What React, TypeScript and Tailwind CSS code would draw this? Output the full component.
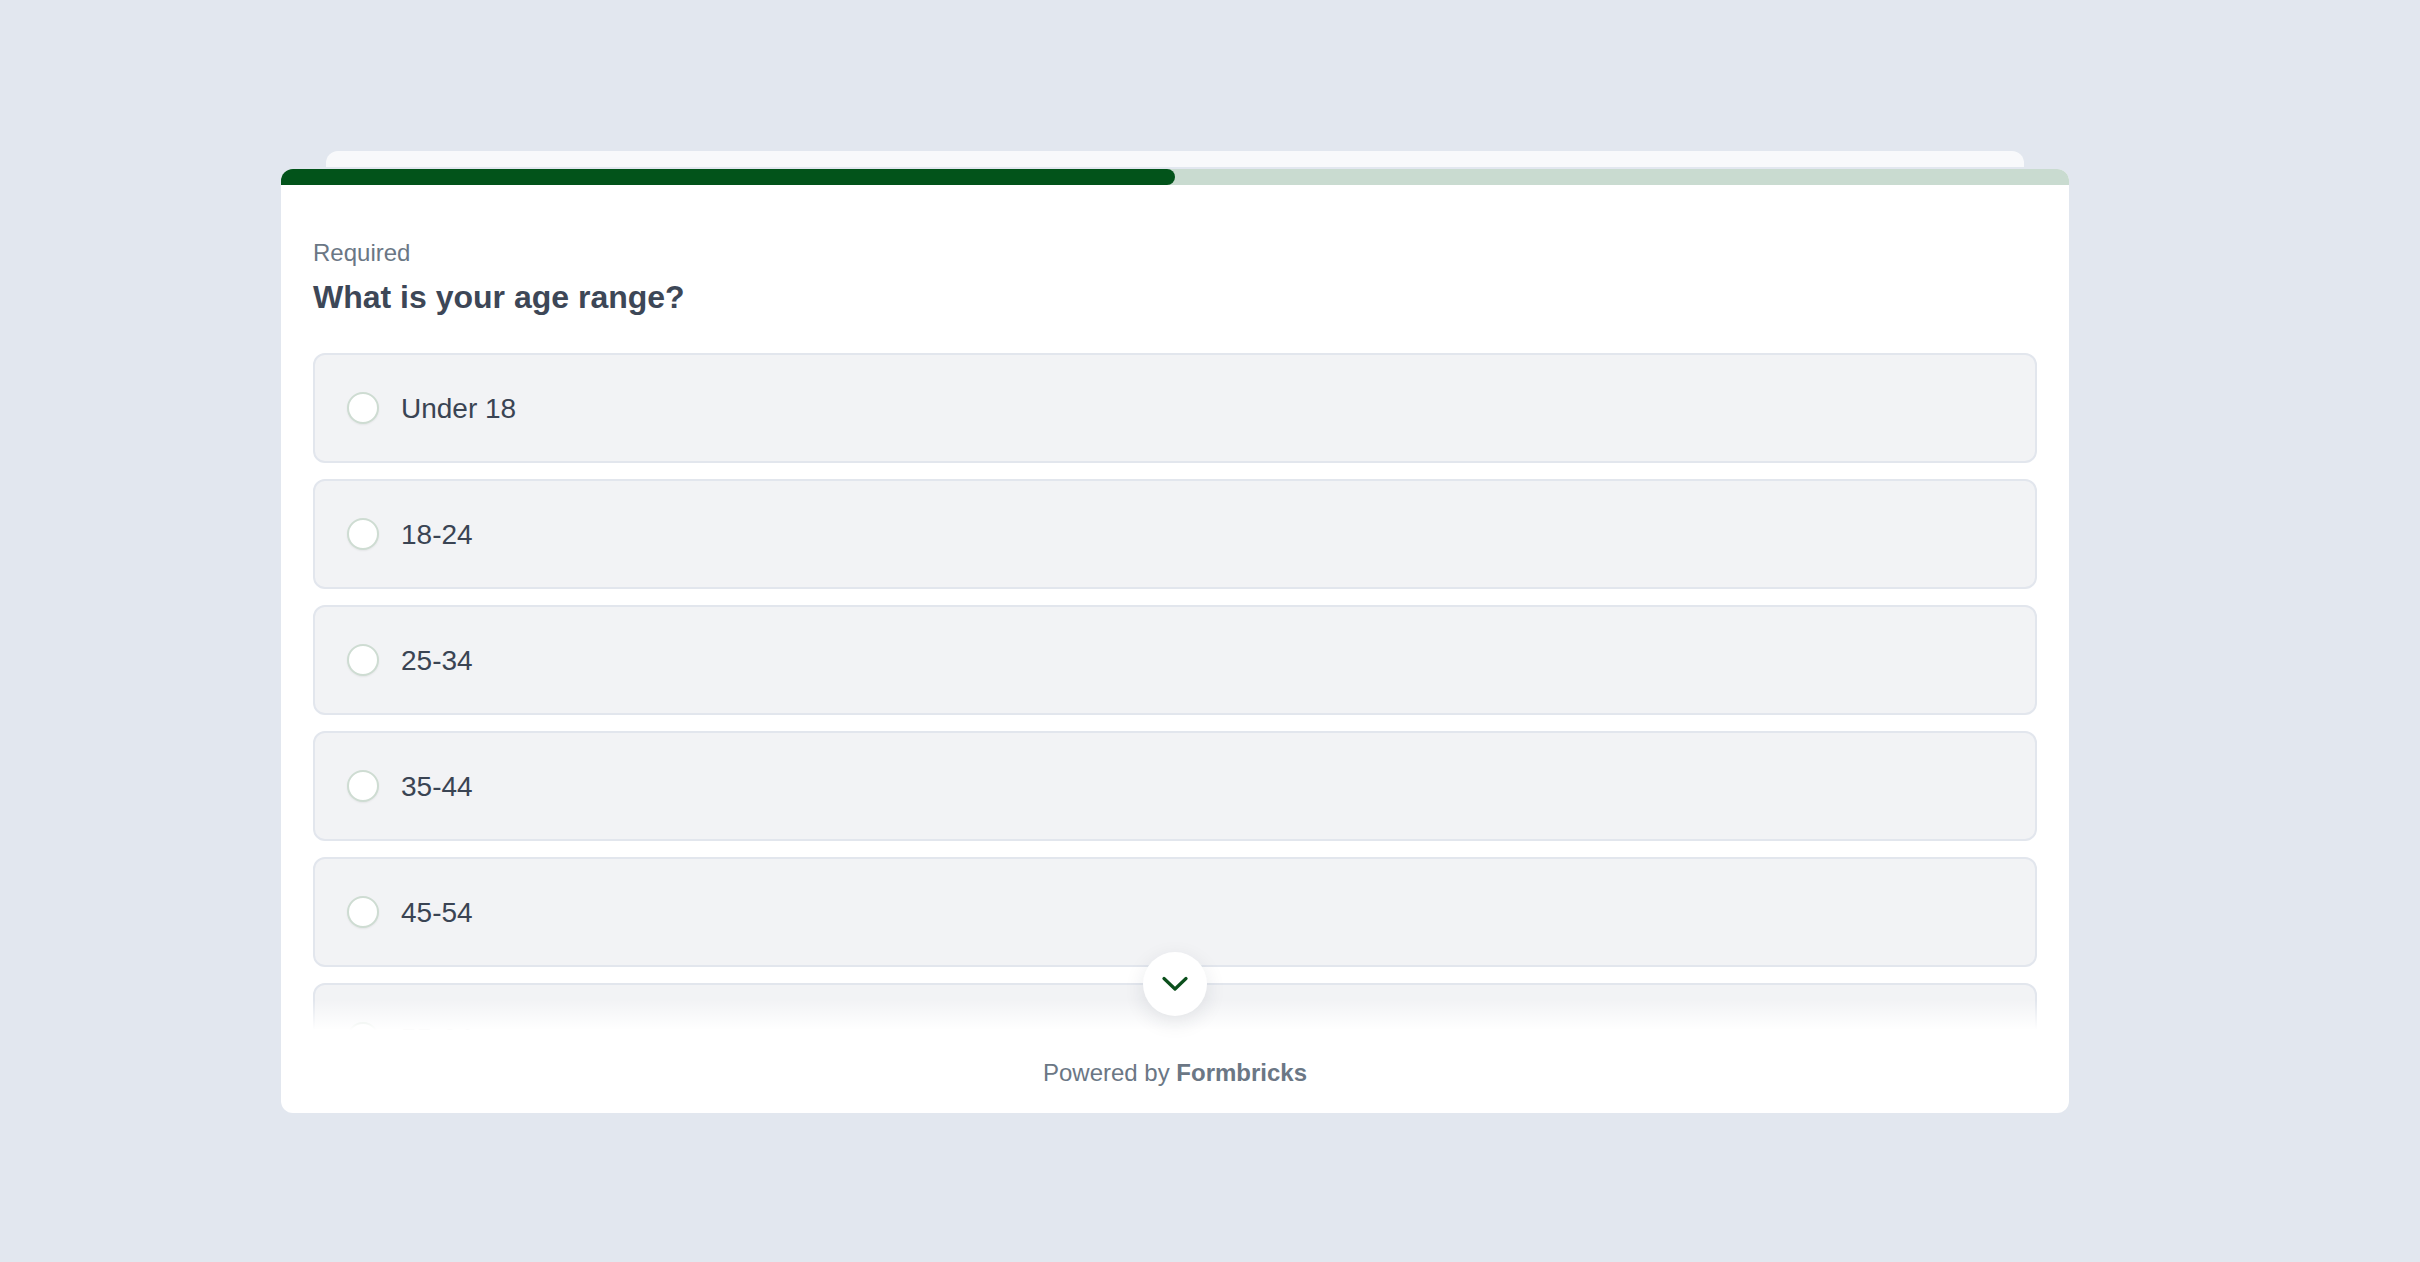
import { useState } from 'react';

const options = ['Under 18', '18-24', '25-34', '35-44', '45-54', '55-64', '65+'];

function ChevronDown() {
  return (
    <svg width="26" height="16" viewBox="0 0 26 16" fill="none">
      <path d="M2 2.5 L13 13 L24 2.5" stroke="#0b4f1c" strokeWidth="3.2" strokeLinecap="round" strokeLinejoin="round" />
    </svg>
  );
}

export default function App() {
  const [selected, setSelected] = useState<string | null>(null);
  const progress = 50;

  return (
    <div
      className="min-h-screen bg-[#e2e7ef] pl-[281px] pt-[151px]"
      style={{ fontFamily: '"Liberation Sans", Arial, Helvetica, sans-serif' }}
    >
      <div className="w-[1788px]">
        {/* stacked card peeking out behind */}
        <div className="mx-[45px] mb-[2px] h-[16px] rounded-t-xl bg-[#f8f9fb]" />

        <div className="relative h-[944px] overflow-hidden rounded-[12px] bg-white">
          {/* progress bar */}
          <div className="h-[16px] w-full bg-[#c9dbd0]">
            <div className="h-full rounded-r-full bg-[#02531a]" style={{ width: `${progress}%` }} />
          </div>

          {/* question body */}
          <div className="relative h-[845px] overflow-hidden px-[32px] pt-[52px]">
            <p className="text-[24px] leading-[32px] text-[#6b7785]">Required</p>
            <h2 className="mt-2 text-[32px] font-bold leading-[40px] text-[#3d4757]">What is your age range?</h2>

            <div className="mt-[36px] flex flex-col gap-[16px]">
              {options.map((opt) => (
                <button
                  key={opt}
                  type="button"
                  onClick={() => setSelected(opt)}
                  className="flex h-[110px] w-full shrink-0 items-center gap-[22px] rounded-[12px] border-2 border-[#e2e6ed] bg-[#f2f3f5] pl-[32px] text-left"
                >
                  <span
                    className={
                      selected === opt
                        ? 'h-8 w-8 shrink-0 rounded-full border-[10px] border-[#02531a] bg-white'
                        : 'h-8 w-8 shrink-0 rounded-full border-2 border-[#cedcd2] bg-white shadow-[0_1px_2px_rgba(0,0,0,0.06)]'
                    }
                  />
                  <span className="pt-[2px] text-[28px] leading-[36px] text-[#3a4453]">{opt}</span>
                </button>
              ))}
            </div>

            {/* fade at the bottom of the scroll area */}
            <div className="pointer-events-none absolute bottom-0 left-0 right-0 h-[30px] bg-gradient-to-b from-white/0 to-white" />
          </div>

          {/* scroll hint */}
          <button
            type="button"
            className="absolute left-1/2 top-[783px] flex h-16 w-16 -translate-x-1/2 items-center justify-center rounded-full bg-white shadow-[0_6px_20px_rgba(30,41,59,0.10)]"
          >
            <ChevronDown />
          </button>

          {/* footer */}
          <div className="mt-[27px] text-center text-[24px] leading-[32px] text-[#6b7785]">
            Powered by <span className="font-bold">Formbricks</span>
          </div>
        </div>
      </div>
    </div>
  );
}
